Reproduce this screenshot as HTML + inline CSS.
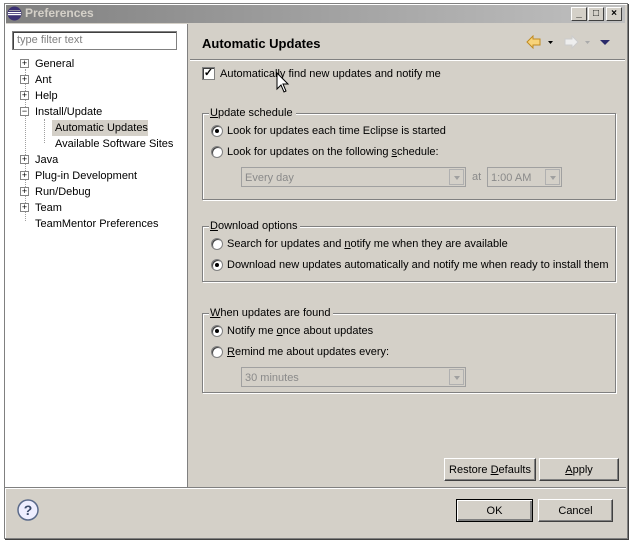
<!DOCTYPE html>
<html><head><meta charset="utf-8"><style>
*{margin:0;padding:0;box-sizing:border-box}
body{width:630px;height:542px;background:#fff;font-family:"Liberation Sans",Tahoma,sans-serif;font-size:11px;color:#000;position:relative;overflow:hidden}
.a{position:absolute;white-space:nowrap;line-height:15px}
#win{position:absolute;left:4px;top:3px;width:624px;height:536px;background:#d4d0c8;border:1px solid #808080;box-shadow:inset 1px 1px 0 #fff,1px 1px 0 #404040}
#title{position:absolute;left:6px;top:5px;width:619px;height:18px;background:linear-gradient(to right,#808080,#c0c0c0)}
.tb{position:absolute;top:7px;width:16px;height:14px;background:#d4d0c8;border:1px solid;border-color:#fff #404040 #404040 #fff;font-size:10px;text-align:center;line-height:12px;font-weight:bold}
#left{position:absolute;left:6px;top:24px;width:182px;height:463px;background:#fff;border-right:1px solid #808080}
.exp{position:absolute;width:9px;height:9px;border:1px solid #848484;background:#fff;font-size:9px;line-height:7px;text-align:center;color:#000}
.grp{position:absolute;border:1px solid #808080;box-shadow:1px 1px 0 #fff,inset 1px 1px 0 #fff}
.lg{position:absolute;background:#d4d0c8;padding:0 3px 0 1px;top:-8px;left:6px;line-height:15px}
.rad{position:absolute;width:12px;height:12px;border-radius:50%;background:#fff;border:1px solid #808080;box-shadow:inset 1px 1px 0 #404040}
.rad.on::after{content:"";position:absolute;left:3px;top:3px;width:4px;height:4px;border-radius:50%;background:#000}
.cb{position:absolute;height:20px;border:1px solid #a0a0a0;background:#d4d0c8;color:#8a8a8a;padding:3px 3px;line-height:14px}
.cb i{position:absolute;right:1px;top:1px;width:15px;height:16px;border:1px solid #b0b0b0;background:#d4d0c8}
.cb i::after{content:"";position:absolute;left:4px;top:6px;border:3px solid transparent;border-top:4px solid #a0a0a0}
.btn{position:absolute;height:23px;background:#d4d0c8;border:1px solid;border-color:#fff #404040 #404040 #fff;box-shadow:inset -1px -1px 0 #808080;text-align:center;line-height:22px}
u{text-decoration:underline}
</style></head><body>
<div id="win"></div>
<div id="title"></div>
<svg class="a" style="left:7px;top:6px" width="15" height="15" viewBox="0 0 15 15"><circle cx="7.5" cy="7.5" r="7" fill="#3b3172"/><rect x="1" y="6" width="13" height="1.2" fill="#fff"/><rect x="1" y="8" width="13" height="1.2" fill="#fff"/><rect x="2" y="4" width="11" height="0.8" fill="#aaa"/></svg>
<div class="a" style="left:25px;top:6px;color:#d4d0c8;font-weight:bold;font-size:12px">Preferences</div>
<div class="tb" style="left:571px">_</div><div class="tb" style="left:588px">□</div><div class="tb" style="left:606px">×</div>
<div id="left"></div>
<div class="a" style="left:12px;top:31px;width:165px;height:19px;border:1px solid #808080;box-shadow:inset 1px 1px 0 #404040;background:#fff;color:#808080;padding:1px 4px">type filter text</div>
<div class="a" style="left:25px;top:69px;height:152px;border-left:1px dotted #a0a0a0"></div>
<div class="a" style="left:44px;top:119px;height:24px;border-left:1px dotted #a0a0a0"></div>
<div class="exp" style="left:20px;top:59px">+</div><div class="a" style="left:35px;top:57px">General</div>
<div class="exp" style="left:20px;top:75px">+</div><div class="a" style="left:35px;top:73px">Ant</div>
<div class="exp" style="left:20px;top:91px">+</div><div class="a" style="left:35px;top:89px">Help</div>
<div class="exp" style="left:20px;top:107px">−</div><div class="a" style="left:35px;top:105px">Install/Update</div>
<div class="a" style="left:52px;top:120px;width:96px;height:16px;background:#d4d0c8"></div>
<div class="a" style="left:55px;top:121px">Automatic Updates</div>
<div class="a" style="left:55px;top:137px">Available Software Sites</div>
<div class="exp" style="left:20px;top:155px">+</div><div class="a" style="left:35px;top:153px">Java</div>
<div class="exp" style="left:20px;top:171px">+</div><div class="a" style="left:35px;top:169px">Plug-in Development</div>
<div class="exp" style="left:20px;top:187px">+</div><div class="a" style="left:35px;top:185px">Run/Debug</div>
<div class="exp" style="left:20px;top:203px">+</div><div class="a" style="left:35px;top:201px">Team</div>
<div class="a" style="left:35px;top:217px">TeamMentor Preferences</div>
<div class="a" style="left:202px;top:36px;font-weight:bold;font-size:13px">Automatic Updates</div>
<svg class="a" style="left:526px;top:35px" width="90" height="14"><path d="M1 7 L7 1 V4 H14 V10 H7 V13 Z" fill="#f7d37a" stroke="#c08a20"/><path d="M22 6 h5 l-2.5 3z" fill="#000"/><path d="M52 7 L46 1 V4 H39 V10 H46 V13 Z" fill="#eee" stroke="#ccc"/><path d="M59 6 h5 l-2.5 3z" fill="#aaa"/><path d="M74 5 h10 l-5 5z" fill="#2a2a6a"/></svg>
<div class="a" style="left:190px;top:59px;width:435px;border-top:1px solid #808080;border-bottom:1px solid #fff"></div>
<div class="a" style="left:202px;top:67px;width:13px;height:13px;background:#fff;border:1px solid #808080;box-shadow:inset 1px 1px 0 #404040;font-size:11px;line-height:10px;text-align:center;font-weight:bold">✓</div>
<div class="a" style="left:220px;top:67px">Automatically find new updates and notify me</div>
<svg class="a" style="left:276px;top:72px" width="14" height="22"><path d="M1 1 V17 L5 13 L8 20 L10 19 L7 12 H12 Z" fill="#fff" stroke="#000"/></svg>
<div class="grp" style="left:202px;top:113px;width:414px;height:87px"><div class="lg"><u>U</u>pdate schedule</div></div>
<div class="rad on" style="left:211px;top:125px"></div><div class="a" style="left:227px;top:124px">Look for updates each time Eclipse is started</div>
<div class="rad" style="left:211px;top:146px"></div><div class="a" style="left:227px;top:145px">Look for updates on the following <u>s</u>chedule:</div>
<div class="cb" style="left:241px;top:167px;width:225px">Every day<i></i></div>
<div class="a" style="left:472px;top:170px;color:#8a8a8a">at</div>
<div class="cb" style="left:487px;top:167px;width:75px">1:00 AM<i></i></div>
<div class="grp" style="left:202px;top:226px;width:414px;height:56px"><div class="lg"><u>D</u>ownload options</div></div>
<div class="rad" style="left:211px;top:238px"></div><div class="a" style="left:227px;top:237px">Search for updates and <u>n</u>otify me when they are available</div>
<div class="rad on" style="left:211px;top:259px"></div><div class="a" style="left:227px;top:258px">Download new updates automatically and notify me when ready to install them</div>
<div class="grp" style="left:202px;top:313px;width:414px;height:80px"><div class="lg"><u>W</u>hen updates are found</div></div>
<div class="rad on" style="left:211px;top:325px"></div><div class="a" style="left:227px;top:324px">Notify me <u>o</u>nce about updates</div>
<div class="rad" style="left:211px;top:346px"></div><div class="a" style="left:227px;top:345px"><u>R</u>emind me about updates every:</div>
<div class="cb" style="left:241px;top:367px;width:225px">30 minutes<i></i></div>
<div class="btn" style="left:444px;top:458px;width:92px">Restore <u>D</u>efaults</div>
<div class="btn" style="left:539px;top:458px;width:80px"><u>A</u>pply</div>
<div class="a" style="left:5px;top:487px;width:621px;border-top:1px solid #808080;border-bottom:1px solid #fff"></div>
<svg class="a" style="left:17px;top:499px" width="22" height="22"><circle cx="11" cy="11" r="10" fill="#eef" stroke="#5a6a8a" stroke-width="1.5"/><text x="11" y="16" text-anchor="middle" font-family="Liberation Sans" font-weight="bold" font-size="14" fill="#3a4a6a">?</text></svg>
<div class="btn" style="left:456px;top:499px;width:77px;border:1px solid #000;box-shadow:inset 1px 1px 0 #fff,inset -2px -2px 0 #808080">OK</div>
<div class="btn" style="left:538px;top:499px;width:75px">Cancel</div>
</body></html>
